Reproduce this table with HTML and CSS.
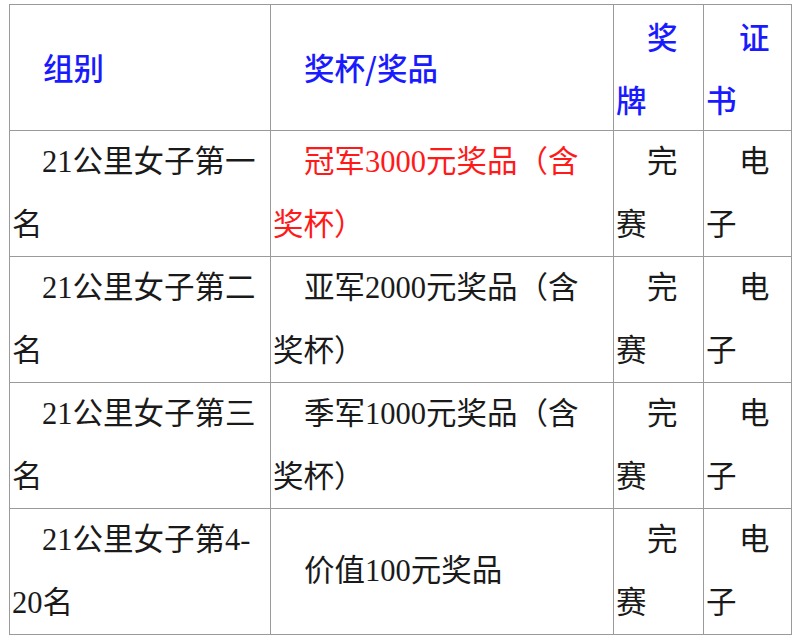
FILE: index.html
```html
<!DOCTYPE html>
<html lang="zh-CN">
<head>
<meta charset="utf-8">
<title>奖项设置</title>
<link rel="stylesheet" href="styles.css">
</head>
<body>
<table class="awards">
  <colgroup>
    <col class="c-group">
    <col class="c-prize">
    <col class="c-medal">
    <col class="c-cert">
  </colgroup>
  <tr class="head">
    <td>组别</td>
    <td>奖杯/奖品</td>
    <td>奖<br>牌</td>
    <td>证<br>书</td>
  </tr>
  <tr>
    <td>21公里女子第一<br>名</td>
    <td class="red">冠军3000元奖品（含<br>奖杯）</td>
    <td>完<br>赛</td>
    <td>电<br>子</td>
  </tr>
  <tr>
    <td>21公里女子第二<br>名</td>
    <td>亚军2000元奖品（含<br>奖杯）</td>
    <td>完<br>赛</td>
    <td>电<br>子</td>
  </tr>
  <tr>
    <td>21公里女子第三<br>名</td>
    <td>季军1000元奖品（含<br>奖杯）</td>
    <td>完<br>赛</td>
    <td>电<br>子</td>
  </tr>
  <tr>
    <td>21公里女子第4-<br>20名</td>
    <td>价值100元奖品</td>
    <td>完<br>赛</td>
    <td>电<br>子</td>
  </tr>
</table>
</body>
</html>
```

FILE: styles.css
```css
html, body {
  margin: 0;
  padding: 0;
  background: #ffffff;
}

body {
  padding: 4px 0 0 9px;
}

.awards {
  border-collapse: collapse;
  table-layout: fixed;
  width: 782px;
  font-family: "Liberation Serif", "Noto Sans CJK SC", serif;
  font-size: 30.5px;
  color: #1a1a1a;
}

.c-group { width: 261px; }
.c-prize { width: 343px; }
.c-medal { width: 90px; }
.c-cert { width: 88px; }

.awards td {
  border: 1px solid #9a9a9a;
  padding: 0 2px;
  height: 125px;
  line-height: 62.5px;
  text-indent: 30px;
  vertical-align: middle;
  white-space: nowrap;
  overflow: hidden;
}

.awards td:nth-child(2) { text-indent: 31px; }
.awards td:nth-child(3) { text-indent: 31px; }
.awards td:nth-child(4) { text-indent: 33px; }

.head td {
  color: #1a1aff;
  font-family: "Noto Sans CJK SC", sans-serif;
  font-weight: 500;
}

.head td:first-child { text-indent: 31px; }

.red {
  color: #ff1a1a;
}
```
